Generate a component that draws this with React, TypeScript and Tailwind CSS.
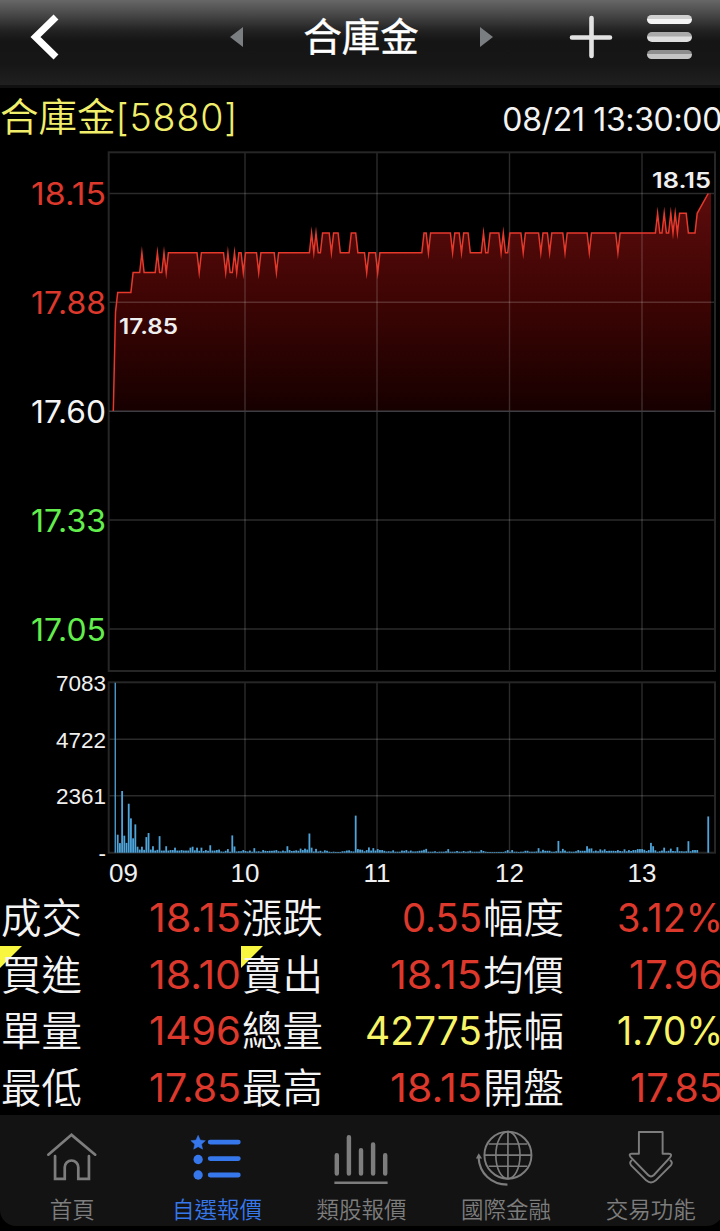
import type { ReactNode } from "react";

const UI_FONT = "font-[Inter,'Noto_Sans_CJK_TC',sans-serif]";

// ---- chart geometry ----
const X0 = 113.3;
const PX_PER_MIN = 2.2035;
const TOP = 150; // page offset of the chart

const minuteX = (m: number) => X0 + m * PX_PER_MIN;
const priceY = (p: number) => 411 - ((p - 17.6) / 0.55) * 217.5 - TOP;

// [minute after 09:00, price]
const PRICES: [number, number][] = [
  [0, 17.6], [1, 17.85], [2, 17.9], [8, 17.9], [9, 17.95], [12, 17.95], [13, 18.0],
  [14, 17.95], [19, 17.95], [20, 18.0], [21, 17.95], [22, 17.95], [23, 18.0], [24, 17.95],
  [25, 18.0], [38, 18.0], [39, 17.95], [40, 18.0], [50, 18.0], [51, 17.95], [52, 18.0],
  [53, 17.95], [54, 17.95], [55, 18.0], [56, 17.95], [57, 18.0], [58, 18.0], [59, 17.95],
  [60, 18.0], [65, 18.0], [66, 17.95], [67, 18.0], [73, 18.0], [74, 17.95], [75, 18.0],
  [89, 18.0], [90, 18.05], [91, 18.0], [92, 18.05], [93, 18.0], [94, 18.0], [95, 18.05],
  [98, 18.05], [99, 18.0], [100, 18.05], [102, 18.05], [103, 18.0], [107, 18.0],
  [108, 18.05], [110, 18.05], [111, 18.0], [114, 18.0], [115, 17.95], [116, 18.0],
  [119, 18.0], [120, 17.95], [121, 18.0], [140, 18.0], [141, 18.05], [142, 18.05],
  [143, 18.0], [144, 18.05], [153, 18.05], [154, 18.0], [155, 18.05], [157, 18.05],
  [158, 18.0], [159, 18.05], [161, 18.05], [162, 18.0], [167, 18.0], [168, 18.05],
  [169, 18.0], [170, 18.0], [171, 18.05], [175, 18.05], [176, 18.0], [177, 18.05],
  [178, 18.0], [179, 18.0], [180, 18.05], [185, 18.05], [186, 18.0], [187, 18.05],
  [193, 18.05], [194, 18.0], [195, 18.05], [197, 18.05], [198, 18.0], [199, 18.05],
  [204, 18.05], [205, 18.0], [206, 18.05], [215, 18.05], [216, 18.0], [217, 18.05],
  [228, 18.05], [229, 18.0], [230, 18.05], [246, 18.05], [247, 18.1], [248, 18.05],
  [249, 18.05], [250, 18.1], [251, 18.05], [252, 18.05], [253, 18.1], [254, 18.05],
  [255, 18.1], [256, 18.05], [257, 18.1], [260, 18.1], [261, 18.05], [264, 18.05],
  [265, 18.1], [270, 18.15],
];

// lots traded in each minute from 09:00
const VOLUMES = [
  0, 7083, 750, 400, 2570, 710, 410, 2040, 1430, 600, 1180, 250, 130, 250, 120, 650, 820, 130, 270, 90, 120, 690, 90, 90, 270, 90, 110, 110, 210, 90, 90,
  110, 90, 90, 90, 210, 250, 100, 210, 80, 210, 70, 110, 80, 310, 90, 90, 110, 130, 50, 40, 80, 150, 40, 720, 260, 50, 60, 60, 110, 70,
  50, 90, 40, 190, 50, 60, 40, 110, 80, 70, 80, 80, 90, 110, 60, 50, 90, 60, 270, 110, 70, 80, 100, 80, 170, 110, 170, 130, 800, 210,
  50, 160, 50, 80, 40, 100, 80, 40, 30, 40, 30, 30, 30, 60, 60, 90, 100, 60, 50, 1545, 150, 130, 120, 60, 110, 220, 90, 190, 90, 150,
  110, 110, 80, 50, 60, 50, 100, 40, 40, 40, 90, 80, 110, 50, 90, 50, 50, 60, 80, 90, 120, 160, 40, 40, 40, 60, 30, 40, 40, 40,
  60, 150, 40, 40, 40, 70, 40, 40, 70, 40, 50, 80, 40, 40, 40, 40, 110, 70, 40, 30, 30, 30, 30, 30, 30, 30, 30, 60, 110, 40,
  110, 40, 40, 30, 40, 40, 80, 80, 40, 40, 40, 50, 190, 50, 120, 80, 80, 80, 40, 40, 60, 490, 60, 160, 90, 40, 50, 40, 40, 60,
  110, 80, 80, 80, 270, 170, 180, 60, 90, 60, 140, 90, 140, 70, 80, 80, 80, 70, 110, 70, 60, 140, 60, 110, 70, 110, 110, 150, 150, 150,
  120, 70, 110, 410, 270, 100, 40, 60, 90, 210, 60, 80, 170, 70, 60, 230, 60, 60, 50, 60, 480, 60, 110, 110, 110, 0, 0, 0, 0,
  1510,
];

const HOUR_X = [245, 377, 509.5, 642];

const LINE_PATH = PRICES.map(
  ([m, p], i) => `${i === 0 ? "M" : "L"}${minuteX(m).toFixed(1)} ${priceY(p).toFixed(1)}`,
).join("");
const AREA_PATH = `${LINE_PATH}H711V261H113.3Z`;

const PRICE_LABELS = [
  { text: "18.15", y: 55, fill: "#dc382c" },
  { text: "17.88", y: 164, fill: "#dc382c" },
  { text: "17.60", y: 272.7, fill: "#f4f4f4" },
  { text: "17.33", y: 381.5, fill: "#62ee4c" },
  { text: "17.05", y: 490.5, fill: "#62ee4c" },
];

const STATS = [
  { label: "成交", value: "18.15", width: 92, color: "#dc382c" },
  { label: "漲跌", value: "0.55", width: 80, color: "#dc382c" },
  { label: "幅度", value: "3.12%", width: 106, color: "#dc382c" },
  { label: "買進", value: "18.10", width: 92, color: "#dc382c", flag: true },
  { label: "賣出", value: "18.15", width: 92, color: "#dc382c", flag: true },
  { label: "均價", value: "17.96", width: 94, color: "#dc382c" },
  { label: "單量", value: "1496", width: 92, color: "#dc382c" },
  { label: "總量", value: "42775", width: 117, color: "#f7f467" },
  { label: "振幅", value: "1.70%", width: 106, color: "#f7f467" },
  { label: "最低", value: "17.85", width: 92, color: "#dc382c" },
  { label: "最高", value: "18.15", width: 92, color: "#dc382c" },
  { label: "開盤", value: "17.85", width: 93, color: "#dc382c" },
];

function Header() {
  return (
    <header className="h-[88px] border-b-[3px] border-[#101010] bg-[linear-gradient(to_bottom,#676767_0%,#464646_18%,#222_36%,#151515_48%,#161616_75%,#202020_100%)]">
      <div className="flex h-[74px] items-center">
        <svg className="ml-[30px] h-[46px] w-[30px]" viewBox="0 0 30 46" fill="none">
          <path d="M26 3 5.500 23 26 43" stroke="#fff" strokeWidth="7" />
        </svg>
        <svg className="ml-[169px] h-[22px] w-[15px]" viewBox="0 0 15 22">
          <path d="M14 1v20L1 11z" fill="#7b7e81" />
        </svg>
        <h1 className="ml-[58px] w-[118px] text-center text-[38.5px] leading-[50px] font-normal whitespace-nowrap text-white [-webkit-text-stroke:0.4px_#fff]">
          合庫金
        </h1>
        <svg className="ml-[59px] h-[22px] w-[15px]" viewBox="0 0 15 22">
          <path d="M1 1v20l13-10z" fill="#7b7e81" />
        </svg>
        <svg className="ml-[75px] h-[44px] w-[44px]" viewBox="0 0 44 44">
          <path d="M22.500 3v38M3 22.500h38" stroke="#e2e2e2" strokeWidth="4.600" strokeLinecap="round" />
        </svg>
        <div className="ml-[34px] flex flex-col gap-[8px]">
          <span className="h-[9.5px] w-[45px] rounded-full bg-linear-to-b from-[#d0d0d0] from-40% to-[#f4f4f4] to-50%" />
          <span className="h-[9.5px] w-[45px] rounded-full bg-linear-to-b from-[#aaa] from-40% to-[#dedede] to-50%" />
          <span className="h-[9.5px] w-[45px] rounded-full bg-linear-to-b from-[#8e8e8e] from-40% to-[#c4c4c4] to-50%" />
        </div>
      </div>
    </header>
  );
}

function Chart() {
  return (
    <svg className="block h-[740px] w-[720px]" viewBox="0 0 720 740">
      <defs>
        <linearGradient id="area" gradientUnits="userSpaceOnUse" x1="0" y1="43" x2="0" y2="261">
          <stop offset="0" stopColor="#5c0c0c" />
          <stop offset="0.45" stopColor="#400504" />
          <stop offset="1" stopColor="#170000" />
        </linearGradient>
      </defs>

      <path d={AREA_PATH} fill="url(#area)" />
      <g stroke="#fff" strokeOpacity="0.17" strokeWidth="1.4" fill="none">
        <path d="M109 43.5h606M109 152.3h606M109 370h606M109 479h606M109 589.3h606M109 645.8h606" />
        {HOUR_X.map((x) => (
          <path key={x} d={`M${x} 2.5V521M${x} 532.5V703`} />
        ))}
      </g>
      <g stroke="#262626" strokeWidth="2" fill="none">
        <rect x="108.7" y="2.3" width="606.3" height="518.7" />
        <rect x="108.7" y="532.3" width="606.3" height="170.4" />
      </g>
      <path d="M109 261.3h606" stroke="#3e3e42" strokeWidth="1.5" />
      <path d={LINE_PATH} fill="none" stroke="#e5392c" strokeWidth="1.5" strokeMiterlimit="20" />

      <g fill="#4fa5db">
        {VOLUMES.map((v, m) => {
          const h = (v / 7083) * 170;
          return <rect key={m} x={minuteX(m) - 0.9} y={702.7 - h} width={m === 1 ? 1.3 : 1.8} height={h} />;
        })}
      </g>

      <g className="font-[Inter,sans-serif]" fontSize="31.3">
        {PRICE_LABELS.map((l) => (
          <text key={l.text} x="31" y={l.y} fill={l.fill} textLength="75" lengthAdjust="spacingAndGlyphs">
            {l.text}
          </text>
        ))}
      </g>
      <g className="font-[Inter,sans-serif]" fontSize="21.5" fontWeight="600" fill="#efefef">
        <text x="119" y="184" textLength="59" lengthAdjust="spacingAndGlyphs">17.85</text>
        <text x="652" y="38" textLength="59" lengthAdjust="spacingAndGlyphs">18.15</text>
      </g>
      <g className="font-['Liberation_Sans',sans-serif]" fill="#f0f0f0" fontSize="22.5" textAnchor="end">
        <text x="106" y="540.5">7083</text>
        <text x="106" y="597.5">4722</text>
        <text x="106" y="654">2361</text>
        <text x="106" y="711">-</text>
      </g>
      <g className="font-['Liberation_Sans',sans-serif]" fill="#f0f0f0" fontSize="26" textAnchor="middle">
        {["09", "10", "11", "12", "13"].map((h, i) => (
          <text key={h} x={i === 0 ? 123.5 : HOUR_X[i - 1]} y="732">
            {h}
          </text>
        ))}
      </g>
    </svg>
  );
}

function StatGrid() {
  return (
    <section className="grid h-[225px] w-[723px] grid-cols-3 grid-rows-[56.5px_56.5px_56.5px_56.5px]">
      {STATS.map((s) => (
        <div key={s.label} className="relative flex items-center justify-between">
          {s.flag && (
            <svg className="absolute -top-px left-0 h-[22px] w-[22px]" viewBox="0 0 22 22">
              <path d="M0 0h22L0 22z" fill="#f9f63f" />
            </svg>
          )}
          <span className="relative pt-[2px] pl-px text-[40.5px] leading-none font-[350] text-[#f4f4f4]">
            {s.label}
          </span>
          <svg className="h-[40px] overflow-visible" style={{ width: s.width }}>
            <text
              x="0"
              y="33.5"
              fontSize="39.5"
              fill={s.color}
              textLength={s.width}
              lengthAdjust="spacingAndGlyphs"
            >
              {s.value}
            </text>
          </svg>
        </div>
      ))}
    </section>
  );
}

function TabItem({ label, active, children }: { label: string; active?: boolean; children: ReactNode }) {
  return (
    <div className={`flex w-[144.6px] flex-col items-center ${active ? "text-[#3678ec]" : "text-[#7d7d7d]"}`}>
      <svg className="mt-[15px] h-[62px] w-[60px]" viewBox="0 0 60 62" fill="none" stroke="currentColor">
        {children}
      </svg>
      <span className="mt-[4px] text-[22.5px] leading-[32px] font-[350] whitespace-nowrap">{label}</span>
    </div>
  );
}

function TabBar() {
  return (
    <nav className="flex h-[111px] w-[723px] rounded-b-[16px] bg-[#131313]">
      <TabItem label="首頁">
        <path
          d="M5.500 25.500 29.500 5l24.500 20.500M12.500 27v23.500h10V38.500a7 7 0 0 1 14 0v12h11V27"
          strokeWidth="2.8"
          strokeLinecap="round"
        />
      </TabItem>
      <TabItem label="自選報價" active>
        <path
          d="m10.500 1 2.200 4.900 5.300.6-4 3.600 1.100 5.200-4.600-2.600-4.600 2.600L7 10.100l-4-3.600 5.300-.6z"
          transform="translate(0 4.500)"
          fill="currentColor"
          stroke="currentColor"
          strokeWidth="0.5"
        />
        <circle cx="10.500" cy="30.500" r="4.800" fill="currentColor" stroke="none" />
        <circle cx="10.500" cy="46.500" r="4.800" fill="currentColor" stroke="none" />
        <path d="M23 12.500h29M23 29.500h29M23 46.500h29" strokeWidth="5" strokeLinecap="round" />
      </TabItem>
      <TabItem label="類股報價">
        <path d="M5 26v19M17.500 7.500V45M30 21v24M42.500 15v30M55 26v19" strokeWidth="4.600" strokeLinecap="round" />
        <path d="M2.500 54.500h55" strokeWidth="2.600" />
      </TabItem>
      <TabItem label="國際金融">
        <circle cx="32" cy="26" r="24.300" strokeWidth="2" />
        <path d="M32 1.700v48.600M7.700 26h48.600M12 14.500h40M12 37.500h40" strokeWidth="1.700" />
        <ellipse cx="32" cy="26" rx="12.500" ry="24.300" strokeWidth="1.700" />
        <path d="M1.600 28C2.500 45 15 56.500 31.500 56.500" strokeWidth="2.200" />
        <path d="m1.500 24-3 5.500h6.500z" transform="translate(.3 0)" fill="currentColor" stroke="none" />
      </TabItem>
      <TabItem label="交易功能">
        <path
          d="M17.500 2h24.500v22.500h6.500q4 0 1 4L33 46.500q-3 3-6 0L9 28q-2.500-3.500 1-3.500h7.500z"
          strokeWidth="2"
          strokeLinejoin="round"
        />
        <path d="M10.500 31q-3.500 2.500-1 5.500L25 52q5 4.500 10 0l15.500-15.500q2.500-3-1-5.500" strokeWidth="2" />
      </TabItem>
    </nav>
  );
}

export default function App() {
  return (
    <div className={`h-[1231px] w-[720px] overflow-hidden bg-black ${UI_FONT}`} lang="zh-Hant">
      <Header />
      <div className="flex h-[62px] w-[722px] items-center justify-between whitespace-nowrap">
        <h2 className="flex items-center pb-[3px] text-[38.5px] leading-none font-[350] text-[#f1ee6b]">
          合庫金<span className="text-[37.5px] tracking-[0.9px]">[5880]</span>
        </h2>
        <time className="pt-[2px] text-[32px] leading-none tracking-[-0.35px] text-[#f2f2f2]">08/21 13:30:00</time>
      </div>
      <Chart />
      <StatGrid />
      <TabBar />
    </div>
  );
}
